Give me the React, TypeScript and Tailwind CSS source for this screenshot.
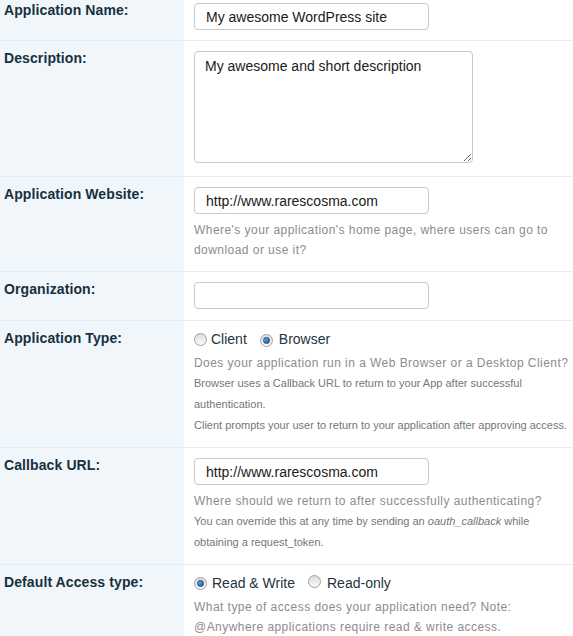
const font = "font-['Liberation_Sans',Arial,sans-serif]";

function Radio({ checked }: { checked?: boolean }) {
  return (
    <span className="relative inline-flex h-[13px] w-[13px] shrink-0 items-center justify-center rounded-full border border-[#9aa0a6] bg-gradient-to-b from-[#dcdcdc] to-[#fbfbfb]">
      {checked && (
        <span className="h-[7px] w-[7px] rounded-full border border-[#1b3f6b] bg-gradient-to-br from-[#6fb6ef] to-[#1557a8]" />
      )}
    </span>
  );
}

function TextInput({ value }: { value?: string }) {
  return (
    <input
      readOnly
      defaultValue={value}
      className="block h-[27px] w-[235px] rounded-[4px] border border-[#c9c9c9] bg-white pl-[11px] text-[14px] text-[#1a1a1a] outline-none"
    />
  );
}

function Help({ children }: { children: React.ReactNode }) {
  return (
    <p className="whitespace-nowrap text-[12px] leading-[20px] tracking-[0.45px] text-[#8c8c8c]">
      {children}
    </p>
  );
}

function Small({ children }: { children: React.ReactNode }) {
  return (
    <p className="whitespace-nowrap text-[11px] leading-[21px] text-[#767676]">
      {children}
    </p>
  );
}

function Row({
  label,
  first,
  children,
}: {
  label: string;
  first?: boolean;
  children: React.ReactNode;
}) {
  return (
    <div className="flex border-b border-[#e4eef6]">
      <div
        className={`w-[184px] shrink-0 bg-[#f1f6fa] pl-[4px] text-[14px] font-bold leading-[16px] tracking-[0.1px] text-[#163041] ${
          first ? "pt-[2px]" : "pt-[9px]"
        }`}
      >
        {label}
      </div>
      <div
        className={`flex-1 pl-[10px] ${first ? "pb-[10px] pt-[3px]" : "pb-[11px] pt-[10px]"}`}
      >
        {children}
      </div>
    </div>
  );
}

export default function App() {
  return (
    <div className={`min-h-screen w-[573px] bg-white ${font}`}>
      <Row label="Application Name:" first>
        <TextInput value="My awesome WordPress site" />
      </Row>

      <Row label="Description:">
        <textarea
          readOnly
          defaultValue="My awesome and short description"
          className="mb-[2px] block h-[112px] w-[279px] rounded-[4px] border border-[#c9c9c9] bg-white pl-[10px] pt-[6px] text-[14px] leading-[16px] text-[#1a1a1a] outline-none"
        />
      </Row>

      <Row label="Application Website:">
        <TextInput value="http://www.rarescosma.com" />
        <div className="mt-[6px]">
          <Help>
            Where's your application's home page, where users can go to
            <br />
            download or use it?
          </Help>
        </div>
      </Row>

      <Row label="Organization:">
        <TextInput />
      </Row>

      <Row label="Application Type:">
        <div className="flex h-[16px] items-center text-[14px] text-[#25343e]">
          <Radio />
          <span className="ml-[4px]">Client</span>
          <span className="ml-[13px]">
            <Radio checked />
          </span>
          <span className="ml-[6px]">Browser</span>
        </div>
        <div className="mt-[6px]">
          <Help>Does your application run in a Web Browser or a Desktop Client?</Help>
          <Small>
            Browser uses a Callback URL to return to your App after successful
            <br />
            authentication.
          </Small>
          <Small>Client prompts your user to return to your application after approving access.</Small>
        </div>
      </Row>

      <Row label="Callback URL:">
        <TextInput value="http://www.rarescosma.com" />
        <div className="mt-[6px]">
          <Help>Where should we return to after successfully authenticating?</Help>
          <Small>
            You can override this at any time by sending an <i>oauth_callback</i> while
            <br />
            obtaining a request_token.
          </Small>
        </div>
      </Row>

      <Row label="Default Access type:">
        <div className="flex h-[16px] items-center text-[14px] text-[#25343e]">
          <Radio checked />
          <span className="ml-[5px]">Read &amp; Write</span>
          <span className="ml-[13px]">
            <Radio />
          </span>
          <span className="ml-[6px]">Read-only</span>
        </div>
        <div className="mt-[6px]">
          <Help>
            What type of access does your application need? Note:
            <br />
            @Anywhere applications require read &amp; write access.
          </Help>
        </div>
      </Row>
    </div>
  );
}
